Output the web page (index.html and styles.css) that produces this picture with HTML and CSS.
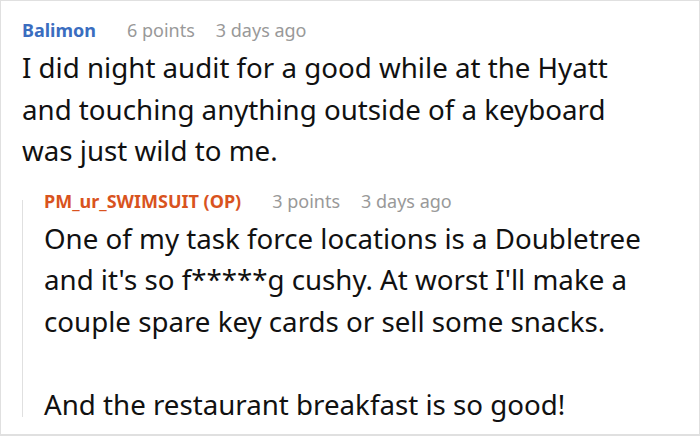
FILE: index.html
```html
<!DOCTYPE html>
<html>
<head>
<meta charset="utf-8">
<link rel="stylesheet" href="styles.css">
</head>
<body>
<div class="thread">
  <div class="comment">
    <div class="meta">
      <span class="author">Balimon</span>
      <span class="points">6 points</span>
      <span class="time">3 days ago</span>
    </div>
    <div class="body">I did night audit for a good while at the Hyatt and touching anything outside of a keyboard was just wild to me.</div>
    <div class="reply">
      <div class="rail"></div>
      <div class="reply-content">
        <div class="meta">
          <span class="author op">PM_ur_SWIMSUIT (OP)</span>
          <span class="points">3 points</span>
          <span class="time">3 days ago</span>
        </div>
        <div class="body">
          <p>One of my task force locations is a Doubletree and it's so f*****g cushy. At worst I'll make a couple spare key cards or sell some snacks.</p>
          <p>And the restaurant breakfast is so good!</p>
        </div>
      </div>
    </div>
  </div>
</div>
</body>
</html>
```
FILE: styles.css
```css
html, body {
  margin: 0;
  padding: 0;
  background: #fff;
}
.thread {
  box-sizing: border-box;
  width: 700px;
  height: 436px;
  border: 1px solid #e0e0e0;
  border-bottom-width: 2px;
  overflow: hidden;
  font-family: "Noto Sans", sans-serif;
  color: #111;
}
.comment {
  padding: 17px 49px 0 21px;
}
.meta {
  display: flex;
  font-size: 18px;
  line-height: 24px;
  margin-bottom: 5px;
}
.author {
  font-weight: bold;
  color: #3a6dbf;
  margin-right: 31px;
}
.author.op {
  color: #d9531e;
}
.points, .time {
  color: #999;
}
.points {
  margin-right: 21px;
}
.body {
  font-size: 27.7px;
  line-height: 41.55px;
}
.body p {
  margin: 0 0 41.55px 0;
}
.body p:last-child {
  margin-bottom: 0;
}
.reply {
  display: flex;
  margin-top: 17px;
}
.rail {
  width: 1px;
  flex: none;
  background: #e0e0e0;
  margin: 11px 0 8px;
}
.reply-content {
  padding-left: 21px;
}
```
